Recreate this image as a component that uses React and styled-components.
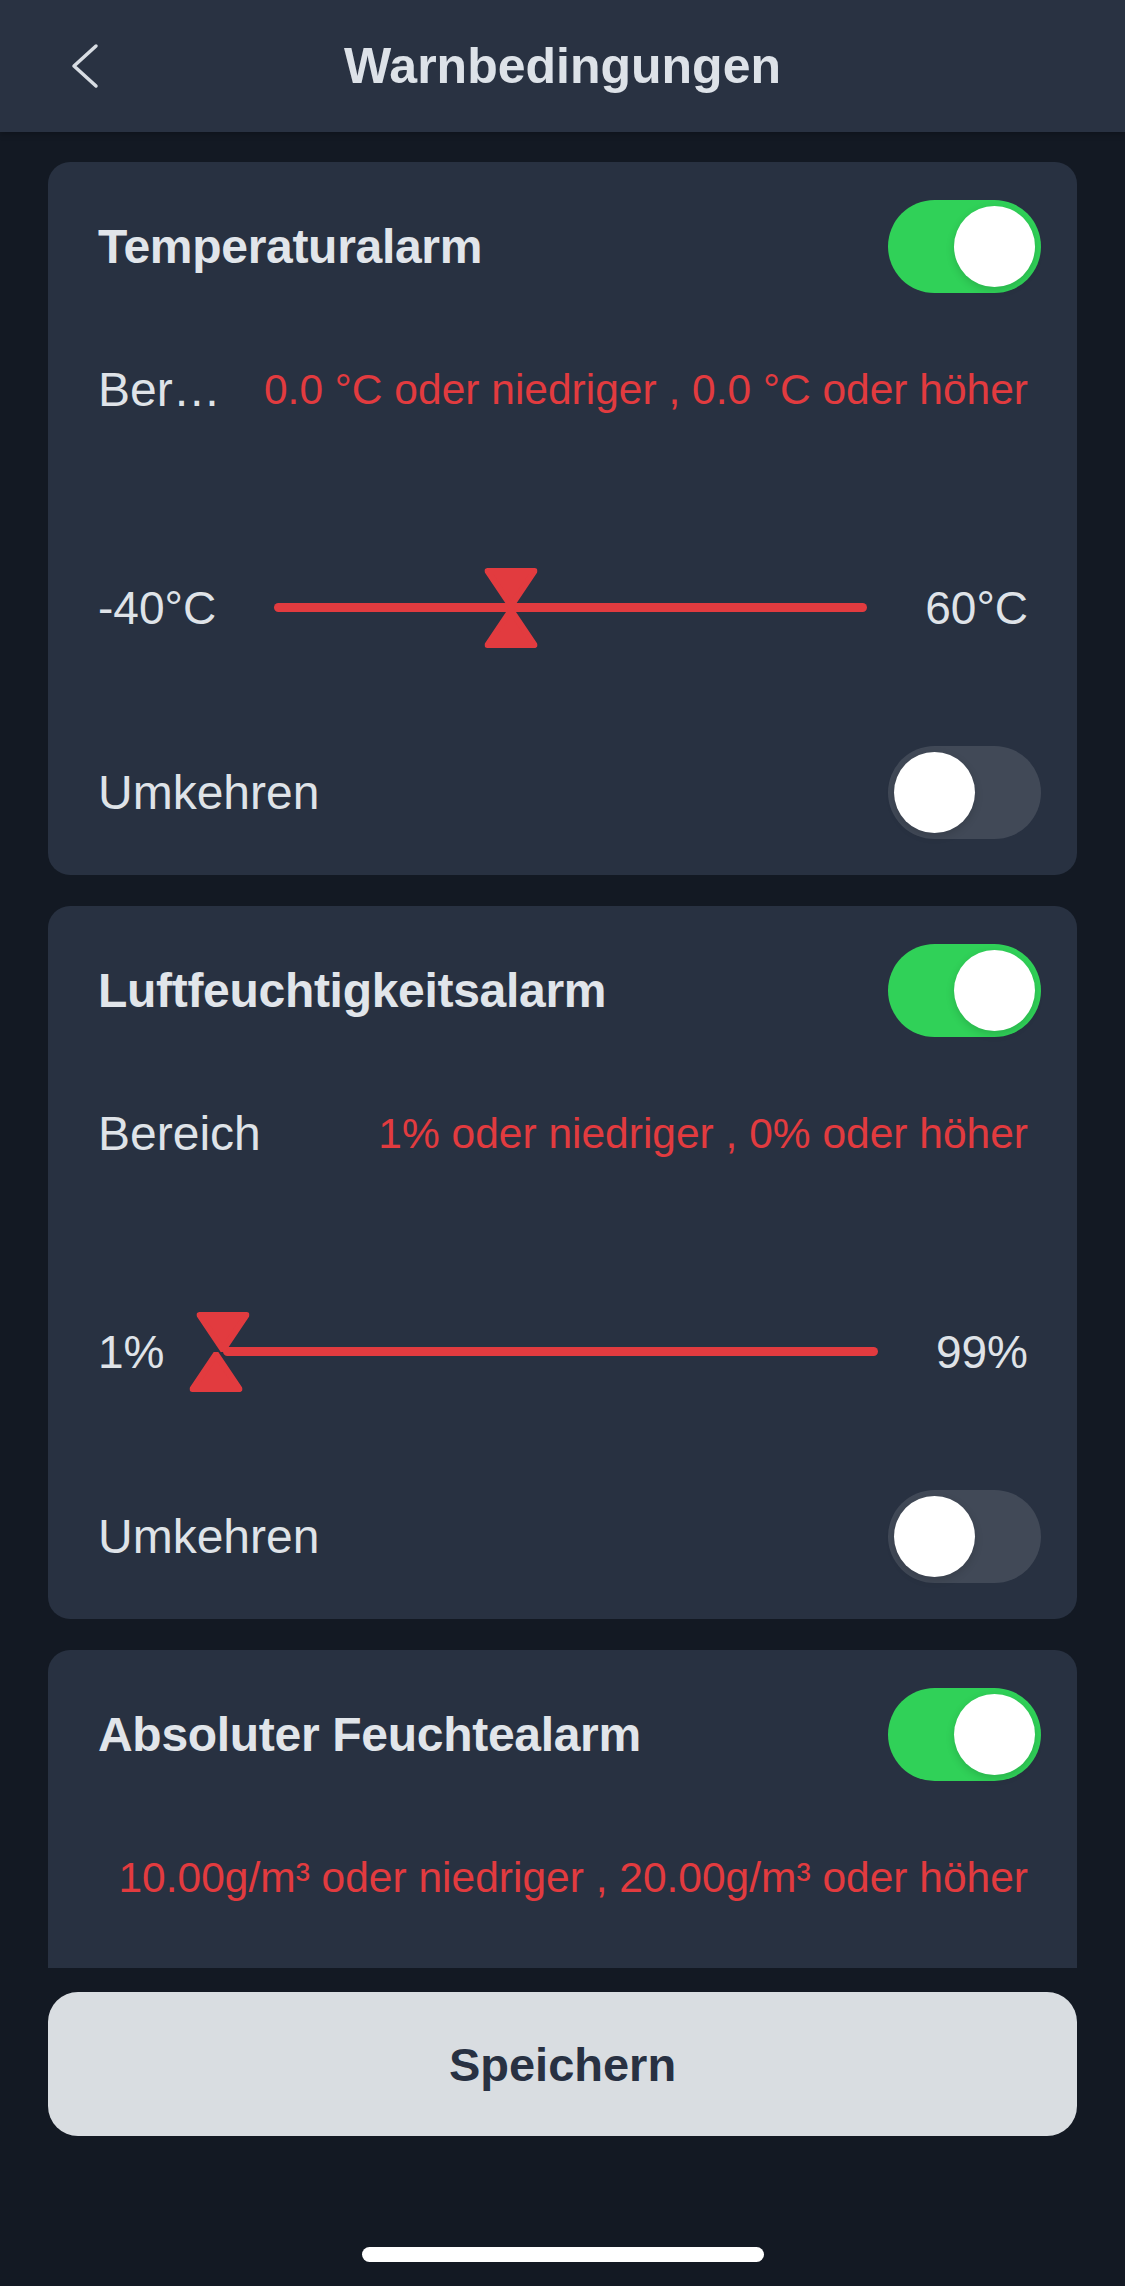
import React from "react";
import styled, { createGlobalStyle } from "styled-components";

const GlobalStyle = createGlobalStyle`
  html, body {
    margin: 0;
    padding: 0;
    background: #131923;
  }
  body {
    font-family: "Liberation Sans", Arial, sans-serif;
    -webkit-font-smoothing: antialiased;
  }
`;

const RED = "#e23b3f";

const Screen = styled.div`
  width: 1125px;
  height: 2286px;
  display: flex;
  flex-direction: column;
  background: #131923;
  overflow: hidden;
`;

const NavBar = styled.header`
  flex-shrink: 0;
  height: 132px;
  display: grid;
  grid-template-columns: 1fr auto 1fr;
  align-items: center;
  background: #293242;
  box-shadow: 0 2px 6px rgba(0, 0, 0, 0.25);
  position: relative;
  z-index: 1;
`;

const BackButton = styled.button`
  justify-self: start;
  margin-left: 70px;
  padding: 0;
  border: none;
  background: none;
  display: flex;
  align-items: center;
  cursor: pointer;
`;

const NavTitle = styled.h1`
  margin: 0;
  font-size: 50px;
  font-weight: 700;
  color: #dde2e8;
`;

const Scroll = styled.main`
  flex: 1;
  overflow: hidden;
  padding: 30px 48px 0;
  display: flex;
  flex-direction: column;
  gap: 31px;
`;

const Card = styled.section`
  flex: ${(p) => (p.$cut ? "1 0 auto" : "0 0 auto")};
  background: #283141;
  border-radius: ${(p) => (p.$cut ? "22px 22px 0 0" : "22px")};
  padding: 38px 49px 36px 50px;
  display: flex;
  flex-direction: column;
`;

const Row = styled.div`
  height: 93px;
  margin-top: ${(p) => p.$gap || 0}px;
  display: flex;
  align-items: center;
  justify-content: flex-end;
  gap: ${(p) => p.$inner || 0}px;
`;

const CardTitle = styled.h2`
  flex: 1;
  margin: 0;
  font-size: 48px;
  font-weight: 700;
  color: #e1e5ea;
  letter-spacing: -0.3px;
`;

const Label = styled.span`
  flex: 1;
  min-width: 0;
  font-size: 48px;
  color: #dfe3e8;
  white-space: nowrap;
  overflow: hidden;
  text-overflow: ellipsis;
`;

const RangeText = styled.span`
  flex-shrink: 0;
  font-size: 42.5px;
  color: ${RED};
  white-space: nowrap;
`;

const Switch = styled.span`
  position: relative;
  flex-shrink: 0;
  width: 153px;
  height: 93px;
  margin-right: -13px;
  border-radius: 47px;
  background: ${(p) => (p.$on ? "#30d158" : "#414957")};

  &::after {
    content: "";
    position: absolute;
    top: 6px;
    left: ${(p) => (p.$on ? "66px" : "6px")};
    width: 81px;
    height: 81px;
    border-radius: 50%;
    background: #ffffff;
    box-shadow: 0 3px 8px rgba(0, 0, 0, 0.15);
  }
`;

const EndLabel = styled.span`
  flex-shrink: 0;
  font-size: 46px;
  color: #dfe3e8;
  white-space: nowrap;
`;

const Track = styled.div`
  flex: 1;
  position: relative;
  height: 9px;
  border-radius: 5px;
  background: ${RED};
`;

const Handle = styled.svg`
  position: absolute;
  width: 53px;
  height: 40px;
  transform: translateX(-50%);
  ${(p) => (p.$up ? "top: 50%;" : "bottom: 50%;")}
`;

const Footer = styled.footer`
  flex-shrink: 0;
  height: 318px;
  padding: 24px 48px 0;
  box-sizing: border-box;
  display: flex;
  flex-direction: column;
  align-items: center;
`;

const SaveButton = styled.button`
  width: 100%;
  height: 144px;
  border: none;
  border-radius: 30px;
  background: #d9dde1;
  color: #283142;
  font-family: inherit;
  font-size: 47px;
  font-weight: 700;
  cursor: pointer;
`;

const HomeBar = styled.div`
  margin-top: 111px;
  width: 402px;
  height: 15px;
  border-radius: 8px;
  background: #ffffff;
`;

const alarms = [
  {
    title: "Temperaturalarm",
    on: true,
    label: "Bereich",
    range: "0.0 °C oder niedriger , 0.0 °C oder höher",
    slider: { min: -40, max: 60, unit: "°C", low: 0, high: 0 },
    invert: false,
  },
  {
    title: "Luftfeuchtigkeitsalarm",
    on: true,
    label: "Bereich",
    range: "1% oder niedriger , 0% oder höher",
    slider: { min: 1, max: 99, unit: "%", low: 1, high: 0 },
    invert: false,
  },
  {
    // only the top of this card is visible above the save bar
    title: "Absoluter Feuchtealarm",
    on: true,
    range: "10.00g/m³ oder niedriger , 20.00g/m³ oder höher",
  },
];

const pct = (v, min, max) => ((v - min) / (max - min)) * 100;

function RangeSlider({ min, max, unit, low, high }) {
  return (
    <Row $gap={125} $inner={58}>
      <EndLabel>
        {min}
        {unit}
      </EndLabel>
      <Track>
        <Handle viewBox="0 0 53 40" style={{ left: `${pct(low, min, max)}%` }}>
          <polygon
            points="3,3 50,3 26.5,38"
            fill={RED}
            stroke={RED}
            strokeWidth="6"
            strokeLinejoin="round"
          />
        </Handle>
        <Handle
          $up
          viewBox="0 0 53 40"
          style={{ left: `${pct(high, min, max)}%` }}
        >
          <polygon
            points="26.5,2 50,37 3,37"
            fill={RED}
            stroke={RED}
            strokeWidth="6"
            strokeLinejoin="round"
          />
        </Handle>
      </Track>
      <EndLabel>
        {max}
        {unit}
      </EndLabel>
    </Row>
  );
}

function AlarmCard({ alarm, cut }) {
  return (
    <Card $cut={cut}>
      <Row>
        <CardTitle>{alarm.title}</CardTitle>
        <Switch $on={alarm.on} />
      </Row>
      <Row $gap={50} $inner={24}>
        {alarm.label && <Label>{alarm.label}</Label>}
        <RangeText>{alarm.range}</RangeText>
      </Row>
      {alarm.slider && <RangeSlider {...alarm.slider} />}
      {alarm.slider && (
        <Row $gap={92}>
          <Label>Umkehren</Label>
          <Switch $on={alarm.invert} />
        </Row>
      )}
    </Card>
  );
}

export default function App() {
  return (
    <>
      <GlobalStyle />
      <Screen>
        <NavBar>
          <BackButton aria-label="Zurück">
            <svg width="30" height="46" viewBox="0 0 30 46">
              <polyline
                points="26,3 4,23 26,43"
                fill="none"
                stroke="#d8dde3"
                strokeWidth="3.5"
                strokeLinecap="round"
                strokeLinejoin="round"
              />
            </svg>
          </BackButton>
          <NavTitle>Warnbedingungen</NavTitle>
          <span />
        </NavBar>
        <Scroll>
          {alarms.map((a, i) => (
            <AlarmCard key={a.title} alarm={a} cut={i === alarms.length - 1} />
          ))}
        </Scroll>
        <Footer>
          <SaveButton>Speichern</SaveButton>
          <HomeBar />
        </Footer>
      </Screen>
    </>
  );
}
